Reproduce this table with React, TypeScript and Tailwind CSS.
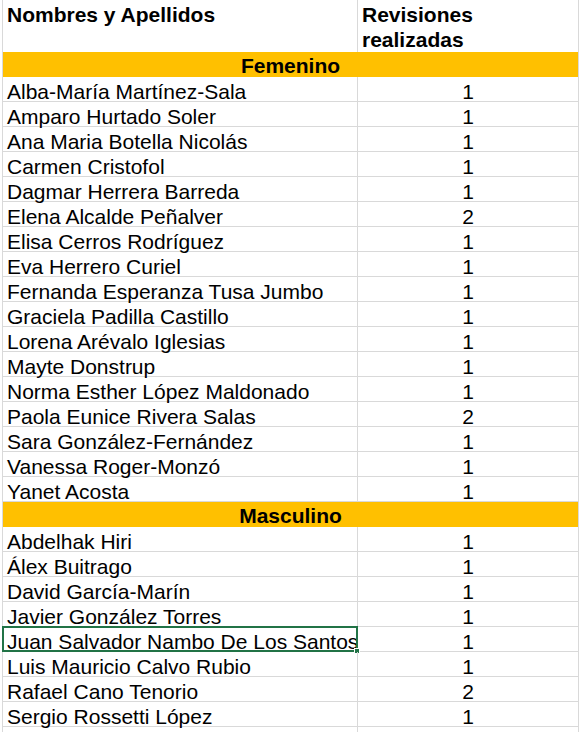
const femenino: [string, number][] = [
  ['Alba-María Martínez-Sala', 1],
  ['Amparo Hurtado Soler', 1],
  ['Ana Maria Botella Nicolás', 1],
  ['Carmen Cristofol', 1],
  ['Dagmar Herrera Barreda', 1],
  ['Elena Alcalde Peñalver', 2],
  ['Elisa Cerros Rodríguez', 1],
  ['Eva Herrero Curiel', 1],
  ['Fernanda Esperanza Tusa Jumbo', 1],
  ['Graciela Padilla Castillo', 1],
  ['Lorena Arévalo Iglesias', 1],
  ['Mayte Donstrup', 1],
  ['Norma Esther López Maldonado', 1],
  ['Paola Eunice Rivera Salas', 2],
  ['Sara González-Fernández', 1],
  ['Vanessa Roger-Monzó', 1],
  ['Yanet Acosta', 1],
];

const masculino: [string, number][] = [
  ['Abdelhak Hiri', 1],
  ['Álex Buitrago', 1],
  ['David García-Marín', 1],
  ['Javier González Torres', 1],
  ['Juan Salvador Nambo De Los Santos', 1],
  ['Luis Mauricio Calvo Rubio', 1],
  ['Rafael Cano Tenorio', 2],
  ['Sergio Rossetti López', 1],
];

function Row({ name, count, selected }: { name: string; count?: number; selected?: boolean }) {
  return (
    <div className="flex h-[25px] border-b border-[#d9d9d9]">
      <div className="relative w-[355px] shrink-0 border-r border-[#d9d9d9] pl-[4px] pt-[3px] leading-[24px] whitespace-nowrap">
        {name}
        {selected && (
          <>
            <div className="absolute -left-[1px] -top-[1px] -right-[1px] -bottom-[1px] border-2 border-[#217346]" />
            <div className="absolute -right-[3px] -bottom-[3px] w-[6px] h-[6px] bg-[#217346] border border-white" />
          </>
        )}
      </div>
      <div className="flex-1 text-center pt-[3px] leading-[24px]">{count}</div>
    </div>
  );
}

function Band({ label }: { label: string }) {
  return (
    <div className="h-[25px] bg-[#ffc000] text-center font-bold pt-[2px] leading-[24px]">{label}</div>
  );
}

export default function App() {
  return (
    <div className="w-[581px] h-[732px] overflow-hidden bg-white px-[2px] text-black text-[21px]" style={{ fontFamily: '"Liberation Sans", Arial, sans-serif' }}>
      <div className="border-l border-r border-[#d9d9d9]">
        <div className="flex h-[52px] font-bold leading-[25px]">
          <div className="w-[355px] shrink-0 border-r border-[#d9d9d9] pl-[4px] pt-[2px]">Nombres y Apellidos</div>
          <div className="flex-1 pl-[4px] pt-[2px]">
            Revisiones
            <br />
            realizadas
          </div>
        </div>
        <Band label="Femenino" />
        {femenino.map(([n, c]) => (
          <Row key={n} name={n} count={c} />
        ))}
        <Band label="Masculino" />
        {masculino.map(([n, c]) => (
          <Row key={n} name={n} count={c} selected={n.startsWith('Juan')} />
        ))}
        <Row name="" />
      </div>
    </div>
  );
}
